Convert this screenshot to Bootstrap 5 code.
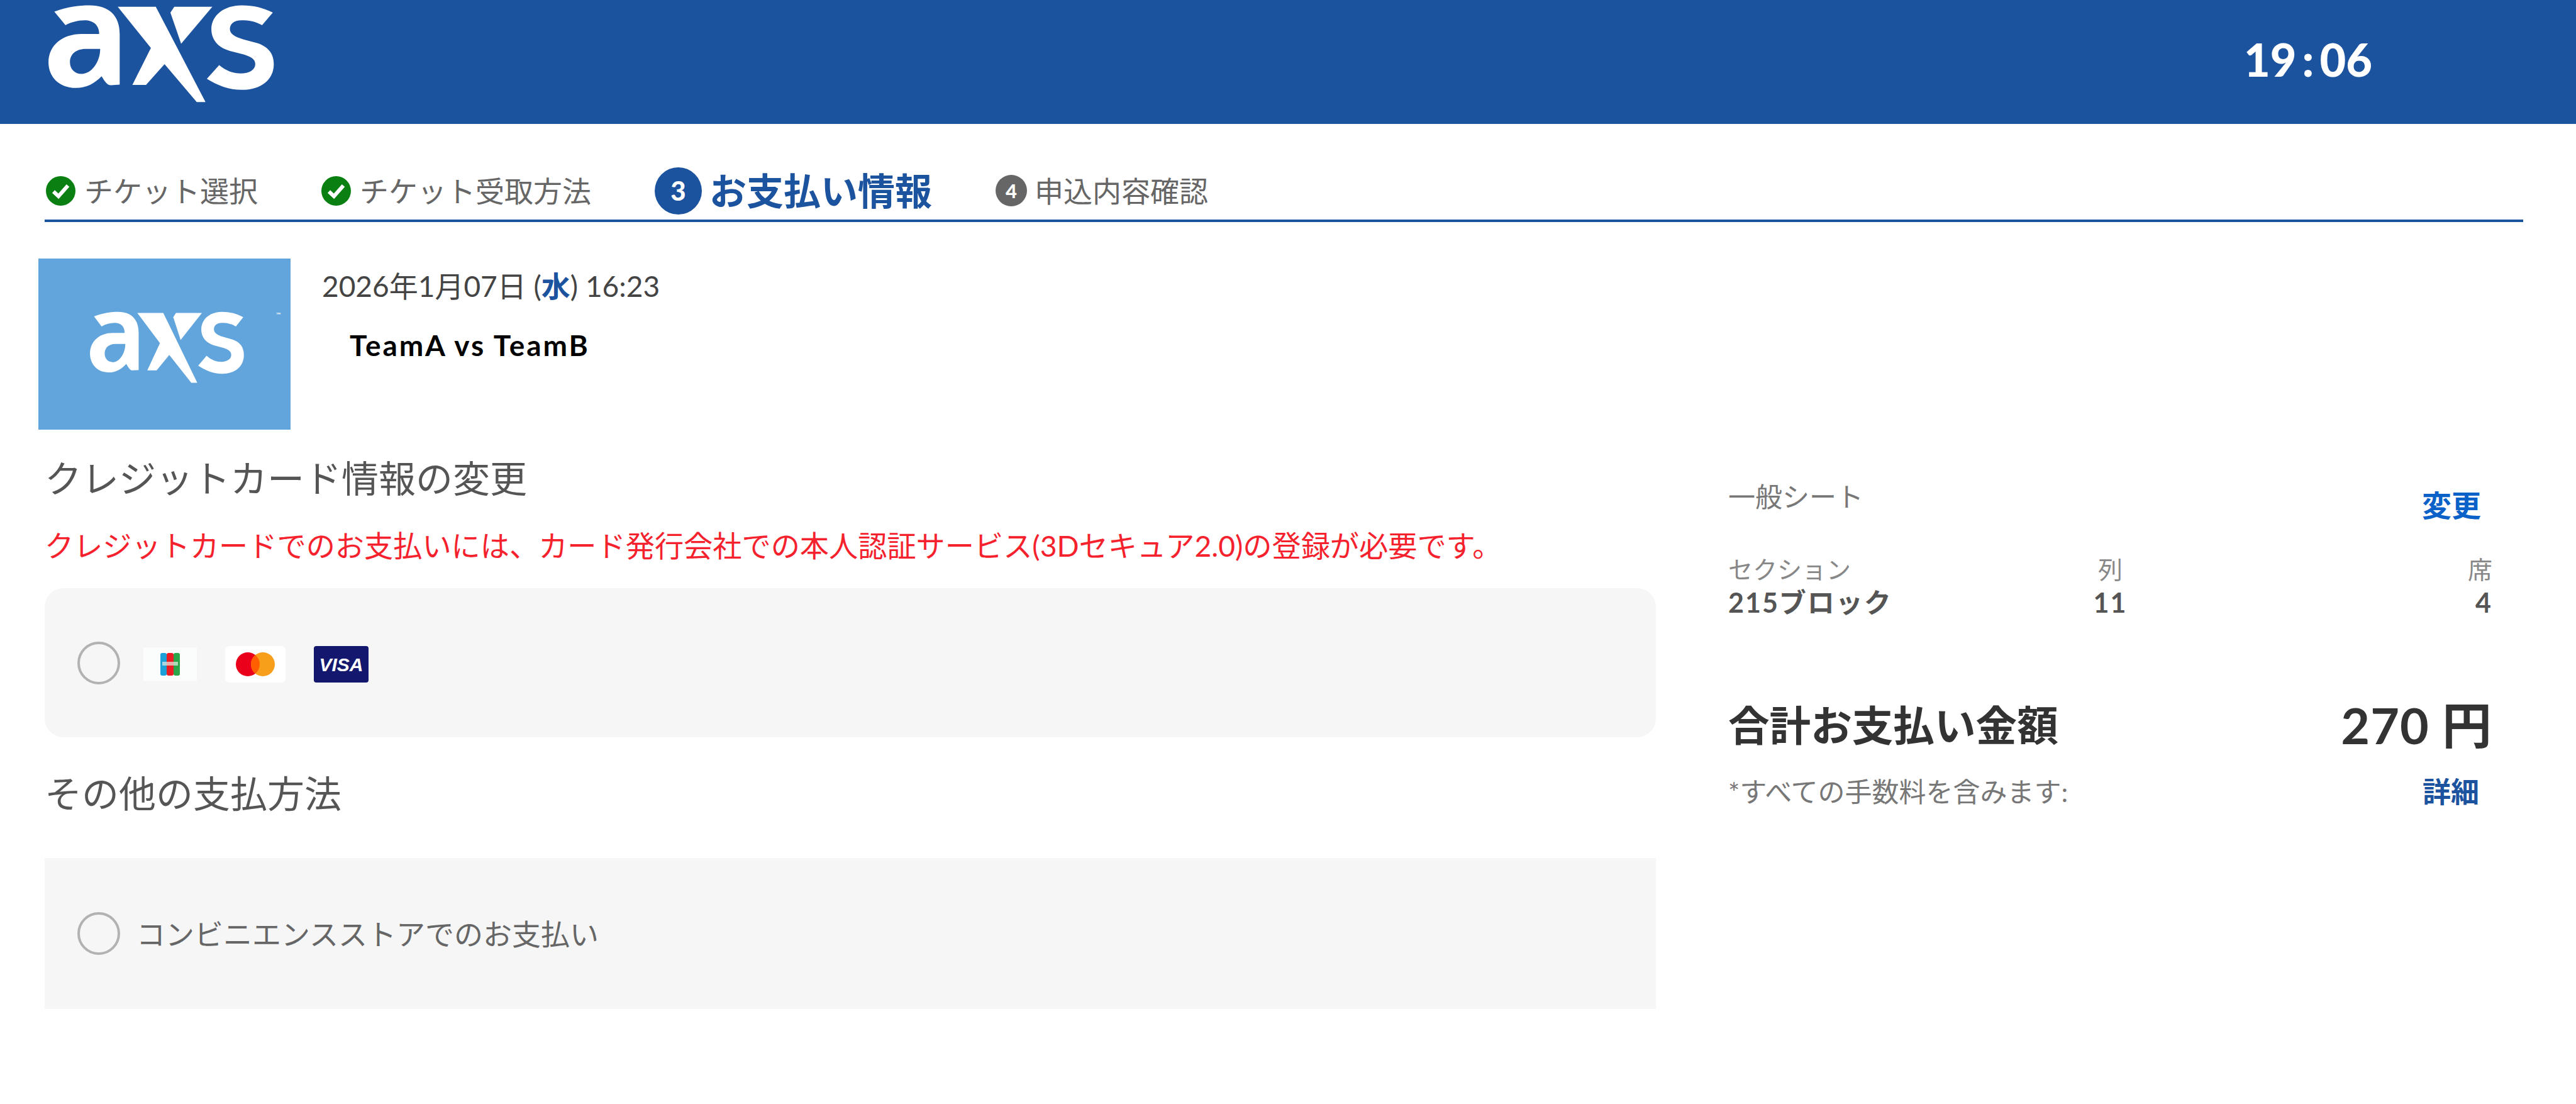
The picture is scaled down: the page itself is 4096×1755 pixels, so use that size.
<!doctype html>
<html lang="ja">
<head>
<meta charset="utf-8">
<title>AXS</title>
<link href="https://cdn.jsdelivr.net/npm/bootstrap@5.3.0/dist/css/bootstrap.min.css" rel="stylesheet">
<style>
html,body{height:100%;overflow:hidden;background:#fff}
body{font-family:Lato,"Noto Sans CJK JP",sans-serif;color:#555}
.top-bar{height:197px;background:#1c539f;padding-left:74px;padding-right:324px}
.top-logo{width:366px;height:161px;margin-top:6px;display:block}
.clock{font-family:Lato,sans-serif;font-weight:900;font-size:72px;line-height:1;color:#fff;word-spacing:-8px;margin-top:-9px}
.steps{margin:0 84px 0 71px;padding:60px 0 0 2px;height:156px;border-bottom:4px solid #1c539f;font-size:46px;color:#666}
.step-ico{width:47px;height:47px;flex:none;margin-right:14px}
.step-gap{margin-right:101px}
.step-num{width:75px;height:75px;flex:none;border-radius:50%;background:#1c539f;color:#fff;font-weight:900;font-size:42px;margin-right:12px}
.step-num-off{width:50px;height:50px;flex:none;border-radius:50%;background:#666;color:#fff;font-weight:900;font-size:31px;margin-right:12px}
.step-on{font-size:59px;font-weight:700;color:#1c539f;line-height:75px}
.event-row{margin:58px 0 0 61px}
.thumb{width:401px;height:272px;background:#62a5dc;flex:none;position:relative}
.thumb svg{width:250px;height:118px;margin:12px 0 0 8px}
.tm-mark{position:absolute;left:378px;top:84px;font-size:10px;line-height:1;color:#fff}
.event-info{margin-left:50px}
.ev-date{font-size:46px;line-height:60px;margin-top:14px;color:#444}
.ev-date b{color:#1c539f;font-weight:700}
.ev-team{font-size:46px;line-height:60px;margin:34px 0 0 44px;color:#000;font-weight:700;letter-spacing:2.9px}
.col-main{width:2562px;margin-left:71px;flex:none}
.col-side{width:1215px;margin-left:115px;flex:none}
.sec-title{font-size:59px;line-height:70px;color:#555}
.sec-first{margin-top:43px}
.sec-second{margin-top:55px}
.notice{font-size:46.2px;line-height:60px;color:#f5222d;margin:41px 0 0}
.pay-box{background:#f6f6f6;padding-left:52px}
.pay-a{height:237px;border-radius:30px;margin-top:38px}
.pay-b{height:240px;margin-top:67px}
.radio-big.form-check-input{width:68px;height:68px;margin:0;border:4px solid #b2b2b2;background-color:transparent;flex:none}
.card-set{margin:4px 0 0 37px;gap:45px}
.card-jcb{width:85px;height:54px}
.card-mc{width:96px;height:58px}
.card-visa{width:87px;height:58px}
.pay-label{font-size:46px;margin-left:26px;color:#666}
.seat-type{font-size:43px;line-height:50px;color:#777;margin-top:82px}
.link-chg{font-size:47px;font-weight:700;color:#0a62c8;margin:95px 18px 0 0;text-decoration:none;line-height:50px}
.seat-head{font-size:39px;line-height:50px;color:#888;margin-top:52px}
.seat-val{font-size:43px;line-height:56px;color:#555;font-weight:700;letter-spacing:2px}
.total-row{margin-top:122px;color:#333;font-weight:700}
.total-lbl{font-size:65.6px;line-height:90px}
.total-amt{font-size:79px;line-height:90px;letter-spacing:1px}
.fee-row{margin-top:31px}
.fee-txt{font-size:43px;line-height:60px;color:#777}
.link-det{font-size:45px;font-weight:700;color:#1c539f;margin-right:21px;line-height:60px;text-decoration:none}
</style>
</head>
<body>
<svg width="0" height="0" class="position-absolute">
  <symbol id="axs" viewBox="90 20 1180 520" preserveAspectRatio="none">
    <path fill="#fff" fill-rule="evenodd" d="M130 60C200 35 260 28 310 28C410 28 465 80 465 175L465 435L420 438C400 438 390 420 372 392C335 430 295 452 240 452C155 452 100 395 100 320C100 235 170 175 270 175L360 175C360 130 330 105 285 105C250 105 215 115 187 130ZM360 252L290 252C240 252 210 280 210 320C210 355 235 380 270 380C320 380 365 320 365 252Z"/>
    <path fill="#fff" d="M455 35L650 35L905 525L860 525L695 330L600 437L530 437L625 247Z"/>
    <path fill="#fff" d="M725 65L745 35L940 35L780 225Z"/>
    <path fill="#fff" d="M1250 65L1195 130C1160 110 1125 105 1090 105C1050 105 1030 125 1030 150C1030 175 1055 190 1100 203L1170 222C1225 240 1255 275 1255 330C1255 410 1190 462 1090 462C1030 462 965 440 912 405L975 335C1010 365 1050 378 1085 378C1130 378 1160 358 1160 330C1160 305 1140 292 1100 280L1030 262C970 245 935 205 935 150C935 80 1000 28 1090 28C1150 28 1200 40 1250 65Z"/>
  </symbol>
  <symbol id="chk" viewBox="0 0 47 47">
    <circle cx="23.5" cy="23.5" r="23.5" fill="#0a8012"/>
    <path d="M12 24.5L20 32L35 15" fill="none" stroke="#fff" stroke-width="6"/>
  </symbol>
</svg>

<header class="top-bar d-flex justify-content-between align-items-center">
  <svg class="top-logo align-self-start" aria-label="AXS"><use href="#axs"/></svg>
  <div class="clock">19 : 06</div>
</header>

<nav class="steps d-flex align-items-center">
  <svg class="step-ico"><use href="#chk"/></svg><span class="step-gap">チケット選択</span>
  <svg class="step-ico"><use href="#chk"/></svg><span class="step-gap">チケット受取方法</span>
  <span class="step-num d-flex align-items-center justify-content-center">3</span><span class="step-on step-gap">お支払い情報</span>
  <span class="step-num-off d-flex align-items-center justify-content-center">4</span><span>申込内容確認</span>
</nav>

<section class="event-row d-flex">
  <div class="thumb d-flex align-items-center justify-content-center"><svg aria-label="AXS"><use href="#axs"/></svg><span class="tm-mark">™</span></div>
  <div class="event-info">
    <div class="ev-date">2026年1月07日 (<b>水</b>) 16:23</div>
    <div class="ev-team">TeamA vs TeamB</div>
  </div>
</section>

<main class="d-flex">
  <div class="col-main">
    <h2 class="sec-title sec-first fw-normal mb-0">クレジットカード情報の変更</h2>
    <p class="notice">クレジットカードでのお支払いには、カード発行会社での本人認証サービス(3Dセキュア2.0)の登録が必要です。</p>
    <div class="pay-box pay-a d-flex align-items-center">
      <input class="form-check-input radio-big" type="radio" name="pay" aria-label="クレジットカード">
      <div class="card-set d-flex align-items-center">
        <svg class="card-jcb" viewBox="0 0 85 54"><rect width="85" height="54" fill="#fafdfb"/><rect x="27" y="9" width="10" height="36" rx="3" fill="#1d9fd8"/><rect x="37" y="9" width="11" height="36" rx="3" fill="#ea1c24"/><rect x="48" y="9" width="10" height="36" rx="3" fill="#2aa548"/><rect x="30" y="23" width="25" height="6" fill="#e6f0e6" opacity=".7"/></svg>
        <svg class="card-mc" viewBox="0 0 96 58"><rect width="96" height="58" rx="6" fill="#fff"/><circle cx="36" cy="29" r="19" fill="#eb001b"/><circle cx="60" cy="29" r="19" fill="#f79e1b"/><path d="M48 14.3a19 19 0 0 1 0 29.4a19 19 0 0 1 0-29.4Z" fill="#ff5f00"/></svg>
        <svg class="card-visa" viewBox="0 0 87 58"><rect width="87" height="58" rx="4" fill="#14176e"/><text x="43.5" y="40" text-anchor="middle" font-family="Liberation Sans, sans-serif" font-weight="700" font-style="italic" font-size="30" fill="#fff">VISA</text></svg>
      </div>
    </div>
    <h2 class="sec-title sec-second fw-normal mb-0">その他の支払方法</h2>
    <div class="pay-box pay-b d-flex align-items-center">
      <input class="form-check-input radio-big" type="radio" name="pay" aria-label="コンビニエンスストア">
      <span class="pay-label">コンビニエンスストアでのお支払い</span>
    </div>
  </div>
  <aside class="col-side">
    <div class="d-flex justify-content-between align-items-start">
      <div class="seat-type">一般シート</div>
      <a class="link-chg" href="#">変更</a>
    </div>
    <div class="row g-0 seat-head">
      <div class="col-4">セクション</div><div class="col-4 text-center">列</div><div class="col-4 text-end">席</div>
    </div>
    <div class="row g-0 seat-val">
      <div class="col-4">215ブロック</div><div class="col-4 text-center">11</div><div class="col-4 text-end">4</div>
    </div>
    <div class="d-flex justify-content-between total-row">
      <div class="total-lbl">合計お支払い金額</div><div class="total-amt">270 円</div>
    </div>
    <div class="d-flex justify-content-between fee-row">
      <div class="fee-txt">*すべての手数料を含みます:</div><a class="link-det" href="#">詳細</a>
    </div>
  </aside>
</main>
<script src="https://cdn.jsdelivr.net/npm/bootstrap@5.3.0/dist/js/bootstrap.bundle.min.js"></script>
</body>
</html>
